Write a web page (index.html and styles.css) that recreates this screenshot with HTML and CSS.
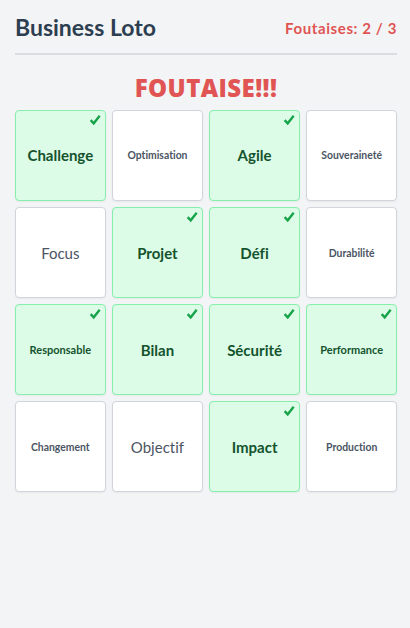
FILE: index.html
```html
<!DOCTYPE html>
<html lang="fr">
<head>
<meta charset="utf-8">
<title>Business Loto</title>
<link rel="stylesheet" href="styles.css">
</head>
<body>
<div class="app">
  <header class="header">
    <h1 class="title">Business Loto</h1>
    <div class="score">Foutaises: 2 / 3</div>
  </header>
  <div class="banner">FOUTAISE!!!</div>
  <div class="grid">
    <div class="cell marked large">Challenge<svg class="check" viewBox="0 0 12 12"><path d="M0.8 6.4 L2.6 4.8 L4.6 6.9 L9.8 0.6 L11.6 2.1 L4.8 10.8 Z"/></svg></div>
    <div class="cell small">Optimisation</div>
    <div class="cell marked large">Agile<svg class="check" viewBox="0 0 12 12"><path d="M0.8 6.4 L2.6 4.8 L4.6 6.9 L9.8 0.6 L11.6 2.1 L4.8 10.8 Z"/></svg></div>
    <div class="cell small">Souveraineté</div>

    <div class="cell large plain">Focus</div>
    <div class="cell marked large">Projet<svg class="check" viewBox="0 0 12 12"><path d="M0.8 6.4 L2.6 4.8 L4.6 6.9 L9.8 0.6 L11.6 2.1 L4.8 10.8 Z"/></svg></div>
    <div class="cell marked large">Défi<svg class="check" viewBox="0 0 12 12"><path d="M0.8 6.4 L2.6 4.8 L4.6 6.9 L9.8 0.6 L11.6 2.1 L4.8 10.8 Z"/></svg></div>
    <div class="cell small">Durabilité</div>

    <div class="cell marked small">Responsable<svg class="check" viewBox="0 0 12 12"><path d="M0.8 6.4 L2.6 4.8 L4.6 6.9 L9.8 0.6 L11.6 2.1 L4.8 10.8 Z"/></svg></div>
    <div class="cell marked large">Bilan<svg class="check" viewBox="0 0 12 12"><path d="M0.8 6.4 L2.6 4.8 L4.6 6.9 L9.8 0.6 L11.6 2.1 L4.8 10.8 Z"/></svg></div>
    <div class="cell marked large">Sécurité<svg class="check" viewBox="0 0 12 12"><path d="M0.8 6.4 L2.6 4.8 L4.6 6.9 L9.8 0.6 L11.6 2.1 L4.8 10.8 Z"/></svg></div>
    <div class="cell marked small">Performance<svg class="check" viewBox="0 0 12 12"><path d="M0.8 6.4 L2.6 4.8 L4.6 6.9 L9.8 0.6 L11.6 2.1 L4.8 10.8 Z"/></svg></div>

    <div class="cell small">Changement</div>
    <div class="cell large plain">Objectif</div>
    <div class="cell marked large">Impact<svg class="check" viewBox="0 0 12 12"><path d="M0.8 6.4 L2.6 4.8 L4.6 6.9 L9.8 0.6 L11.6 2.1 L4.8 10.8 Z"/></svg></div>
    <div class="cell small">Production</div>
  </div>
</div>
</body>
</html>
```
FILE: styles.css
```css
* { box-sizing: border-box; }

html, body {
  margin: 0;
  padding: 0;
  background: #f3f4f6;
}

body {
  font-family: Lato, "Noto Sans", sans-serif;
  color: #2c3e50;
  font-variant-ligatures: none;
}

.app {
  padding: 14px 13px 14px 15px;
}

.header {
  display: flex;
  justify-content: space-between;
  align-items: center;
  padding-bottom: 11px;
  border-bottom: 2px solid #dcdde1;
}

.title {
  margin: 0;
  font-size: 23px;
  font-weight: 700;
  line-height: 1.2;
  color: #2c3e50;
}

.score {
  margin-top: 1px;
  font-size: 15px;
  font-weight: 700;
  letter-spacing: 0.6px;
  color: #e05454;
}

.banner {
  margin: 18px 0 7.5px;
  text-align: center;
  font-family: "Open Sans", Lato, sans-serif;
  font-size: 24px;
  line-height: 30px;
  font-weight: 800;
  letter-spacing: 0.4px;
  color: #e05454;
}

.grid {
  display: grid;
  grid-template-columns: repeat(4, 1fr);
  gap: 6.5px;
}

.cell {
  position: relative;
  aspect-ratio: 1 / 1;
  display: flex;
  align-items: center;
  justify-content: center;
  text-align: center;
  background: #ffffff;
  border: 1px solid #d1d5db;
  border-radius: 4px;
  box-shadow: 0 1px 2px rgba(0, 0, 0, 0.05);
  color: #4b5563;
}

.cell.large { font-size: 15px; }
.cell.small { font-size: 10.4px; font-weight: 700; }
.cell.plain { font-weight: 400; }

.cell.marked {
  background: #dcfce7;
  border-color: #86efac;
  color: #14532d;
  font-weight: 700;
}

.cell.marked.small { font-size: 11px; }

.check {
  position: absolute;
  top: 3px;
  right: 4px;
  width: 12px;
  height: 13px;
  fill: #16a34a;
}
```
